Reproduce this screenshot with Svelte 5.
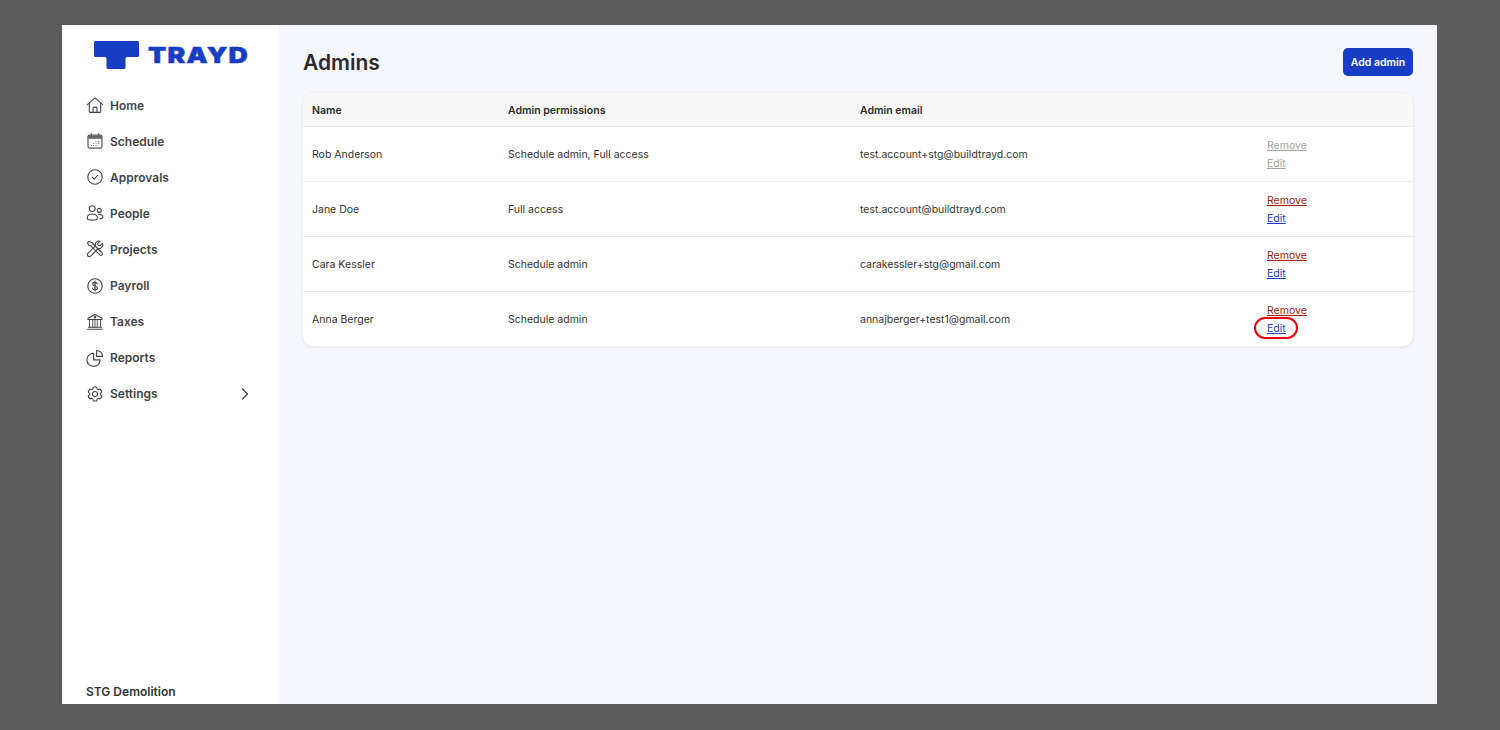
<script lang="ts">
  const nav = [
    { label: 'Home', icon: 'home' },
    { label: 'Schedule', icon: 'schedule' },
    { label: 'Approvals', icon: 'approvals' },
    { label: 'People', icon: 'people' },
    { label: 'Projects', icon: 'projects' },
    { label: 'Payroll', icon: 'payroll' },
    { label: 'Taxes', icon: 'taxes' },
    { label: 'Reports', icon: 'reports' },
    { label: 'Settings', icon: 'settings' }
  ];

  const admins = [
    { name: 'Rob Anderson', perms: 'Schedule admin, Full access', email: 'test.account+stg@buildtrayd.com', disabled: true },
    { name: 'Jane Doe', perms: 'Full access', email: 'test.account@buildtrayd.com' },
    { name: 'Cara Kessler', perms: 'Schedule admin', email: 'carakessler+stg@gmail.com' },
    { name: 'Anna Berger', perms: 'Schedule admin', email: 'annajberger+test1@gmail.com', marked: true }
  ];
</script>

<div class="page">
  <div class="frame">
    <aside class="sidebar">
      <div class="logo">
        <svg class="mark" width="46" height="29" viewBox="0 0 46 29" aria-hidden="true">
          <path d="M1.500 0H43.500a1.500 1.500 0 0 1 1.500 1.500V14.500a1.500 1.500 0 0 1-1.500 1.500H33a1.500 1.500 0 0 0-1.500 1.500V26.500a1.500 1.500 0 0 1-1.500 1.500H14a1.500 1.500 0 0 1-1.500-1.500V17.500a1.500 1.500 0 0 0-1.500-1.500H1.500a1.500 1.500 0 0 1-1.500-1.500V1.500a1.500 1.500 0 0 1 1.500-1.500Z" fill="#173dc5" />
        </svg>
        <span class="wordmark">TRAYD</span>
      </div>

      <nav class="nav">
        {#each nav as item}
          <div class="navItem">
            <svg class="icon" width="18" height="18" viewBox="0 0 18 18" fill="none" stroke="#444" stroke-width="1.1" stroke-linecap="round" stroke-linejoin="round" aria-hidden="true">
              {#if item.icon === 'home'}
                <path d="M1.300 8.600 9 1.800l7.700 6.800" />
                <path d="M3.300 7.400v8.200a.8.8 0 0 0 .8.8h9.800a.8.8 0 0 0 .8-.8V7.400" />
                <path d="M7 16.400v-4.600a.7.7 0 0 1 .7-.7h2.600a.7.7 0 0 1 .7.7v4.600" />
              {:else if item.icon === 'schedule'}
                <rect x="2" y="3.200" width="14" height="13" rx="1.800" stroke="#555" stroke-width="1.200" />
                <path d="M2.300 4h13.400v2.600H2.300z" fill="#666" stroke="#666" stroke-width=".6" />
                <path d="M5.400 1.800v2.200M12.600 1.800v2.200" stroke="#555" stroke-width="1.300" />
                <path d="M9.500 9.500h1M12 9.500h1.500M7 11.500h1M9.500 11.500h1M12 11.500h1.500M5 13.500h1M7 13.500h1M9.500 13.500h1" stroke="#888" stroke-width="1" stroke-linecap="butt" />
              {:else if item.icon === 'approvals'}
                <circle cx="9" cy="9" r="7.200" />
                <path d="m6.200 9.200 2 2 3.700-4.200" />
              {:else if item.icon === 'people'}
                <circle cx="6.300" cy="4.600" r="2.900" />
                <circle cx="13.300" cy="6.400" r="2" />
                <path d="M1.200 14.200c0-2.800 2.200-4.200 5.100-4.200s5.100 1.400 5.100 4.200c0 1.300-2 1.900-5.100 1.900s-5.100-.6-5.100-1.900Z" />
                <path d="M12.600 10.400c2.400-.2 4.300 1 4.300 2.800 0 1-1 1.500-3 1.700" />
              {:else if item.icon === 'projects'}
                <path d="M2.700 1.500 1.500 2.700l1.200 2.600 1.900.3 9.500 9.500a1.500 1.500 0 0 0 2.100-2.100L6.700 3.500l-.4-.9z" />
                <path d="M16.300 3.300 13.800 5.800l-1.700-.5-.5-1.700 2.500-2.400a3.700 3.700 0 0 0-4.700 4.600L1.900 13.300a1.900 1.900 0 0 0 2.800 2.800l7.500-7.600a3.700 3.700 0 0 0 4.100-5.200Z" />
              {:else if item.icon === 'payroll'}
                <circle cx="9" cy="9" r="7.200" />
                <path d="M11.300 6.800C11 5.800 10.100 5.300 9 5.300c-1.300 0-2.300.7-2.300 1.800 0 2.500 4.700 1.300 4.700 3.800 0 1.100-1 1.800-2.400 1.800-1.200 0-2.200-.6-2.500-1.600M9 4v10" stroke-width="1.200" />
              {:else if item.icon === 'taxes'}
                <path d="M9 1.400 2 5.300v1.200h14V5.300Z" />
                <circle cx="9" cy="4.300" r=".7" />
                <path d="M3.500 6.500v7.600M6.700 6.500v7.600M9 6.500v7.600M11.300 6.500v7.600M14.500 6.500v7.600" stroke-width=".9" />
                <path d="M2.500 14.200h13M1.500 16.300h15" />
              {:else if item.icon === 'reports'}
                <path d="M7.600 4.200a6.600 6.600 0 1 0 6.500 6.700H7.600Z" />
                <path d="M10.600 1.500a5.900 5.900 0 0 1 5.900 5.900h-5.900Z" />
              {:else}
                <g transform="translate(-.36 -.36) scale(.78)" stroke-width="1.400">
                  <circle cx="12" cy="12" r="3.200" />
                  <path d="M9.594 3.940c.09-.542.56-.94 1.110-.94h2.593c.55 0 1.020.398 1.110.94l.213 1.281c.063.374.313.686.645.870.074.040.147.083.220.127.325.196.720.257 1.075.124l1.217-.456a1.125 1.125 0 0 1 1.370.490l1.296 2.247a1.125 1.125 0 0 1-.260 1.431l-1.003.827c-.293.241-.438.613-.430.992a7.723 7.723 0 0 1 0 .255c-.008.378.137.750.430.991l1.004.827c.424.350.534.955.260 1.430l-1.298 2.247a1.125 1.125 0 0 1-1.369.491l-1.217-.456c-.355-.133-.750-.072-1.076.124a6.470 6.470 0 0 1-.220.128c-.331.183-.581.495-.644.869l-.213 1.281c-.09.543-.56.940-1.110.940h-2.594c-.55 0-1.019-.398-1.110-.940l-.213-1.281c-.062-.374-.312-.686-.644-.870a6.520 6.520 0 0 1-.220-.127c-.325-.196-.720-.257-1.076-.124l-1.217.456a1.125 1.125 0 0 1-1.369-.490l-1.297-2.247a1.125 1.125 0 0 1 .260-1.431l1.004-.827c.292-.240.437-.613.430-.991a6.932 6.932 0 0 1 0-.255c.007-.380-.138-.751-.430-.992l-1.004-.827a1.125 1.125 0 0 1-.260-1.430l1.297-2.247a1.125 1.125 0 0 1 1.370-.491l1.216.456c.356.133.751.072 1.076-.124.072-.044.146-.086.220-.128.332-.183.582-.495.644-.869l.214-1.280Z" />
                </g>
              {/if}
            </svg>
            <span class="navLabel">{item.label}</span>
            {#if item.icon === 'settings'}
              <svg class="chevron" width="8" height="12" viewBox="0 0 8 12" fill="none" stroke="#444" stroke-width="1.300" stroke-linecap="round" stroke-linejoin="round" aria-hidden="true">
                <path d="m1.500 1 5 5-5 5" />
              </svg>
            {/if}
          </div>
        {/each}
      </nav>

      <div class="company">STG Demolition</div>
    </aside>

    <main class="main">
      <header class="header">
        <h1>Admins</h1>
        <button class="addBtn">Add admin</button>
      </header>

      <section class="table">
        <div class="row head">
          <div>Name</div>
          <div>Admin permissions</div>
          <div>Admin email</div>
          <div></div>
        </div>
        {#each admins as a}
          <div class="row">
            <div>{a.name}</div>
            <div>{a.perms}</div>
            <div>{a.email}</div>
            <div class="actions" class:disabled={a.disabled}>
              <span class="link remove">Remove</span>
              <span class="link edit">
                Edit
                {#if a.marked}<span class="marker"></span>{/if}
              </span>
            </div>
          </div>
        {/each}
      </section>
    </main>
  </div>
</div>

<style>
  :global(body) {
    margin: 0;
    background: #5c5c5c;
  }

  .page {
    height: 730px;
    box-sizing: border-box;
    padding: 25px 63px 26px 62px;
    font-family: Inter, "Liberation Sans", sans-serif;
    color: #2b2b2b;
  }

  .frame {
    display: flex;
    height: 100%;
    background: #f6f7fc;
  }

  .sidebar {
    width: 217px;
    flex: none;
    background: #fff;
    display: flex;
    flex-direction: column;
    box-sizing: border-box;
    overflow: hidden;
  }

  .logo {
    display: flex;
    align-items: center;
    gap: 8px;
    height: 28px;
    margin: 16px 0 0 32px;
  }

  .mark {
    flex: none;
  }

  .wordmark {
    display: inline-block;
    font-weight: 900;
    font-size: 22px;
    line-height: 28px;
    letter-spacing: 1px;
    color: #173dc5;
    -webkit-text-stroke: 0.5px #173dc5;
    transform: scaleX(1.21);
    transform-origin: left center;
  }

  .nav {
    display: flex;
    flex-direction: column;
    margin-top: 18px;
  }

  .navItem {
    display: flex;
    align-items: center;
    height: 36.120px;
    padding: 0 28px 0 24px;
  }

  .icon {
    flex: none;
    margin-right: 6px;
  }

  .navLabel {
    flex: 1;
    font-size: 12px;
    font-weight: 600;
    color: #444;
  }

  .chevron {
    flex: none;
    margin-right: 2px;
  }

  .company {
    margin-top: auto;
    padding: 0 0 4px 24px;
    font-size: 12px;
    font-weight: 600;
    line-height: 16px;
    color: #333;
  }

  .main {
    flex: 1;
    min-width: 0;
    padding: 23px 24px 0;
  }

  .header {
    display: flex;
    align-items: center;
    justify-content: space-between;
    height: 28px;
    margin-bottom: 17px;
  }

  h1 {
    margin: 0;
    padding-top: 1px;
    font-size: 21px;
    font-weight: 600;
    line-height: 28px;
    color: #2b2b2b;
  }

  .addBtn {
    width: 70px;
    height: 28px;
    padding: 0;
    border: none;
    border-radius: 5px;
    background: #173dc5;
    color: #fff;
    font-family: inherit;
    font-size: 10.500px;
    font-weight: 600;
  }

  .table {
    background: #fff;
    border-radius: 10px;
    box-shadow: 0 0 0 1px #eeeff1, 0 1px 3px rgba(0, 0, 0, 0.12);
  }

  .row {
    display: grid;
    grid-template-columns: 196px 352px 407px 1fr;
    align-items: center;
    height: 55px;
    box-sizing: border-box;
    padding: 0 8px 0 9px;
    border-top: 1px solid #e9eaec;
    font-size: 10.500px;
    color: #333;
  }

  .row.head {
    height: 33px;
    padding-top: 1px;
    border-top: none;
    border-radius: 10px 10px 0 0;
    background: #f8f8f9;
    font-weight: 600;
    color: #2b2b2b;
  }

  .actions {
    display: flex;
    flex-direction: column;
    align-items: flex-start;
    gap: 4px;
    padding-top: 2px;
  }

  .link {
    position: relative;
    line-height: 14px;
    text-decoration: underline;
  }

  .remove {
    color: #a01c0e;
  }

  .edit {
    color: #173dc5;
  }

  .disabled .link {
    color: #a3a3a3;
  }

  .marker {
    position: absolute;
    left: -13px;
    top: -5px;
    width: 44px;
    height: 22px;
    box-sizing: border-box;
    border: 2px solid #e8000b;
    border-radius: 11px;
  }
</style>
